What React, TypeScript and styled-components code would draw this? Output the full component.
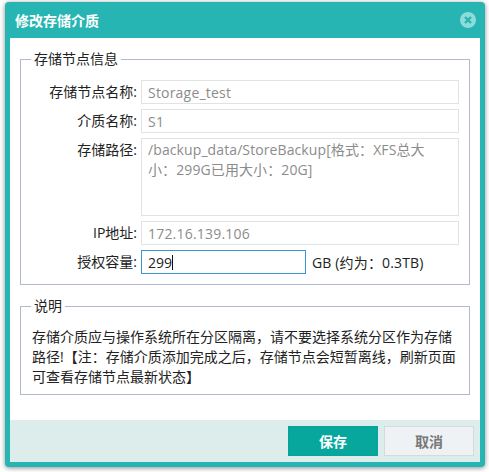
import styled, { createGlobalStyle } from "styled-components";

const GlobalStyle = createGlobalStyle`
  html, body {
    margin: 0;
    background: #fff;
    font-family: "Open Sans", "Noto Sans CJK SC", sans-serif;
  }
`;

const FONT = `"Open Sans", "Noto Sans CJK SC", sans-serif`;

const Page = styled.div`
  width: 489px;
  height: 472px;
  padding: 2px 4px 5px 5px;
  box-sizing: border-box;
  overflow: hidden;
`;

const Dialog = styled.div`
  height: 465px;
  display: flex;
  flex-direction: column;
  background: #26b5b2;
  border-radius: 4px;
  box-shadow: 0 1px 5px rgba(0, 0, 0, 0.45);
  padding: 0 5px 5px;
  box-sizing: border-box;
`;

const Header = styled.div`
  height: 36px;
  flex: none;
  display: flex;
  align-items: center;
  justify-content: space-between;
  color: #fff;
  font-size: 14px;
  font-weight: 700;
  padding: 0 4px 0 5px;
  box-sizing: border-box;
`;

const CloseButton = styled.button`
  width: 16px;
  height: 16px;
  padding: 0;
  border: 0;
  background: none;
  display: block;
  svg { display: block; }
`;

const Body = styled.div`
  flex: 1;
  background: #fff;
  padding: 11px 10px 0;
  display: flex;
  flex-direction: column;
  gap: 11px;
`;

const Group = styled.fieldset<{ $height: number }>`
  margin: 0;
  padding: 0;
  height: ${(p) => p.$height}px;
  box-sizing: border-box;
  border: 1px solid #b1b9cf;
  min-width: 0;
`;

const GroupTitle = styled.legend`
  margin-left: 10px;
  padding: 0 3px;
  font-size: 14px;
  line-height: 20px;
  color: #222;
`;

const Form = styled.div`
  display: flex;
  flex-direction: column;
  gap: 5px;
  padding: 11px 10px 0 0;
`;

const Row = styled.div<{ $top?: boolean }>`
  display: flex;
  align-items: ${(p) => (p.$top ? "flex-start" : "center")};
  gap: 4px;
`;

const Label = styled.label`
  width: 116px;
  flex: none;
  text-align: right;
  font-size: 14px;
  line-height: 24px;
  color: #222;
`;

const ReadOnlyInput = styled.input`
  flex: 1;
  min-width: 0;
  height: 24px;
  box-sizing: border-box;
  border: 1px solid #e2e2e2;
  background: #fff;
  padding: 0 6px;
  font-family: ${FONT};
  font-size: 14px;
  letter-spacing: 0.2px;
  color: #8c8c8c;
  outline: none;
`;

const ReadOnlyArea = styled.textarea`
  flex: 1;
  min-width: 0;
  height: 78px;
  box-sizing: border-box;
  border: 1px solid #e2e2e2;
  background: #fff;
  padding: 1px 24px 0 6px;
  margin: 0;
  font-family: ${FONT};
  font-size: 14px;
  letter-spacing: 0.1px;
  line-height: 20px;
  color: #8c8c8c;
  outline: none;
  resize: none;
  overflow: hidden;
`;

const CapacityBox = styled.div`
  width: 165px;
  height: 24px;
  flex: none;
  box-sizing: border-box;
  border: 1px solid #3a94d6;
  padding: 0 6px;
  display: flex;
  align-items: center;
  font-size: 14px;
  color: #222;
`;

const Caret = styled.span`
  width: 1px;
  height: 15px;
  background: #111;
`;

const Unit = styled.span`
  margin-left: 2px;
  font-size: 14px;
  letter-spacing: 0.15px;
  color: #222;
`;

const Note = styled.p`
  margin: 0;
  padding: 11px 9px 0 11px;
  font-size: 14px;
  line-height: 20px;
  color: #222;
`;

const Footer = styled.div`
  height: 42px;
  flex: none;
  background: #dcedec;
  display: flex;
  justify-content: flex-end;
  align-items: flex-start;
  gap: 6px;
  padding: 6px 6px 0 0;
  box-sizing: border-box;
`;

const ActionButton = styled.button<{ $primary?: boolean }>`
  width: 90px;
  height: 30px;
  padding: 0;
  box-sizing: border-box;
  border: 1px solid ${(p) => (p.$primary ? "#07a39a" : "#d3dbdf")};
  background: ${(p) => (p.$primary ? "#07a79d" : "#eff2f5")};
  color: ${(p) => (p.$primary ? "#fff" : "#777")};
  font-family: ${FONT};
  font-size: 14px;
  font-weight: 700;
`;

export default function App() {
  return (
    <Page>
      <GlobalStyle />
      <Dialog>
        <Header>
          修改存储介质
          <CloseButton aria-label="关闭">
            <svg width="16" height="16" viewBox="0 0 16 16">
              <circle cx="8" cy="8" r="8" fill="#8ddcd9" />
              <path d="M5 5l6 6M11 5l-6 6" stroke="#26b5b2" strokeWidth="2.4" />
            </svg>
          </CloseButton>
        </Header>
        <Body>
          <Group $height={236}>
            <GroupTitle>存储节点信息</GroupTitle>
            <Form>
              <Row>
                <Label>存储节点名称:</Label>
                <ReadOnlyInput readOnly value="Storage_test" />
              </Row>
              <Row>
                <Label>介质名称:</Label>
                <ReadOnlyInput readOnly value="S1" />
              </Row>
              <Row $top>
                <Label>存储路径:</Label>
                <ReadOnlyArea readOnly value="/backup_data/StoreBackup[格式：XFS总大小：299G已用大小：20G]" />
              </Row>
              <Row>
                <Label>IP地址:</Label>
                <ReadOnlyInput readOnly value="172.16.139.106" />
              </Row>
              <Row>
                <Label>授权容量:</Label>
                <CapacityBox>299<Caret /></CapacityBox>
                <Unit>GB (约为：0.3TB)</Unit>
              </Row>
            </Form>
          </Group>
          <Group $height={99}>
            <GroupTitle>说明</GroupTitle>
            <Note>
              存储介质应与操作系统所在分区隔离，请不要选择系统分区作为存储路径!【注：存储介质添加完成之后，存储节点会短暂离线，刷新页面可查看存储节点最新状态】
            </Note>
          </Group>
        </Body>
        <Footer>
          <ActionButton $primary>保存</ActionButton>
          <ActionButton>取消</ActionButton>
        </Footer>
      </Dialog>
    </Page>
  );
}
